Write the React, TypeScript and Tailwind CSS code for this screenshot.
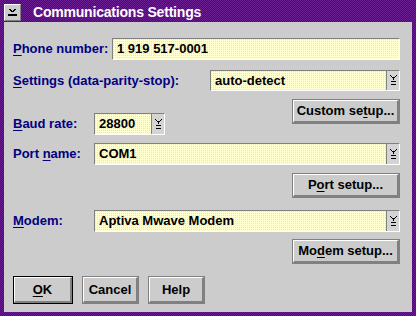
import React from 'react';

const frame =
  'bg-[conic-gradient(#1818b0_25%,#6a2090_0_50%,#1818b0_0_75%,#6a2090_0)] bg-size-[2px_2px]';
const dots =
  'bg-[linear-gradient(to_bottom,transparent_1px,#ffffd0_1px),linear-gradient(to_right,#ffff00_1px,#ffffd0_1px)] bg-size-[2px_2px]';

const DropGlyph = () => (
  <svg width="7" height="11" viewBox="0 0 7 11" shapeRendering="crispEdges" fill="#000">
    <rect x="0" y="0" width="1" height="1" />
    <rect x="6" y="0" width="1" height="1" />
    <rect x="1" y="1" width="1" height="1" />
    <rect x="5" y="1" width="1" height="1" />
    <rect x="2" y="2" width="3" height="1" />
    <rect x="3" y="3" width="1" height="2" />
    <rect x="1" y="6" width="5" height="1" />
    <rect x="1" y="9" width="5" height="1" />
  </svg>
);

const MenuGlyph = () => (
  <svg width="9" height="7" viewBox="0 0 9 7" shapeRendering="crispEdges" fill="#000">
    <rect x="1" y="0" width="2" height="1" />
    <rect x="6" y="0" width="2" height="1" />
    <rect x="2" y="1" width="2" height="1" />
    <rect x="5" y="1" width="2" height="1" />
    <rect x="3" y="2" width="3" height="1" />
    <rect x="0" y="5" width="9" height="2" />
  </svg>
);

function Label({ children, className = '' }: { children: React.ReactNode; className?: string }) {
  return <span className={`text-[#000080] whitespace-nowrap ${className}`}>{children}</span>;
}

function Combo({ value, withButton = true }: { value: string; withButton?: boolean }) {
  return (
    <div className="flex-1 h-full flex border border-t-[#808080] border-l-[#808080] border-b-white border-r-white">
      <div className={`flex-1 flex items-center pl-1 text-black text-[13px] ${dots}`}>{value}</div>
      {withButton && (
        <div className="w-[13px] flex items-center justify-center bg-[#d4d4d4] border-l border-[#808080]">
          <DropGlyph />
        </div>
      )}
    </div>
  );
}

function PushButton({
  children,
  className = '',
  isDefault = false,
}: {
  children: React.ReactNode;
  className?: string;
  isDefault?: boolean;
}) {
  return (
    <button
      className={`border ${isDefault ? 'border-black' : 'border-[#808080]'} bg-[#cccccc] p-0 ${className}`}
    >
      <div className="h-full flex items-center justify-center text-black border-t border-l border-white border-b-2 border-r-2 border-b-[#808080] border-r-[#808080]">
        {children}
      </div>
    </button>
  );
}

export default function App() {
  return (
    <div
      className={`w-[416px] h-[316px] p-1 flex flex-col font-['Liberation_Sans',Arial,sans-serif] font-bold text-[13px] ${frame}`}
    >
      <div className="h-[18px] flex items-start shrink-0">
        <div className="w-[17px] h-[17px] bg-[#cccccc] border-t border-l border-white border-b border-r border-b-[#808080] border-r-[#808080] flex items-center justify-center">
          <MenuGlyph />
        </div>
        <span className="ml-3 text-white text-[14px] leading-[17px] tracking-[-0.2px]">Communications Settings</span>
      </div>

      <div className="flex-1 bg-[#cccccc] flex flex-col pl-[9px] pr-[12px]">
        <div className="mt-[16px] h-[22px] flex items-center">
          <Label className="w-[99px]">
            <u className="underline-offset-2">P</u>hone number:
          </Label>
          <Combo value="1 919 517-0001" withButton={false} />
        </div>

        <div className="mt-[10px] h-[21px] flex items-center">
          <Label className="w-[197px]">
            <u className="underline-offset-2">S</u>ettings (data-parity-stop):
          </Label>
          <Combo value="auto-detect" />
        </div>

        <div className="mt-[8px] h-[36px] flex justify-between">
          <div className="self-end h-[22px] flex items-center">
            <Label className="w-[81px]">
              <u className="underline-offset-2">B</u>aud rate:
            </Label>
            <div className="w-[71px] h-full flex">
              <Combo value="28800" />
            </div>
          </div>
          <PushButton className="w-[108px] h-[25px]">
            Custom se<u className="underline-offset-2">t</u>up...
          </PushButton>
        </div>

        <div className="mt-[8px] h-[22px] flex items-center">
          <Label className="w-[81px]">
            Port <u className="underline-offset-2">n</u>ame:
          </Label>
          <Combo value="COM1" />
        </div>

        <PushButton className="mt-[8px] self-end w-[108px] h-[25px]">
          P<u className="underline-offset-2">o</u>rt setup...
        </PushButton>

        <div className="mt-[12px] h-[22px] flex items-center">
          <Label className="w-[81px]">
            <u className="underline-offset-2">M</u>odem:
          </Label>
          <Combo value="Aptiva Mwave Modem" />
        </div>

        <PushButton className="mt-[7px] self-end w-[108px] h-[25px]">
          Mo<u className="underline-offset-2">d</u>em setup...
        </PushButton>

        <div className="mt-[12px] h-[28px] flex gap-[9px]">
          <PushButton isDefault className="w-[60px] h-full">
            <u className="underline-offset-2">O</u>K
          </PushButton>
          <PushButton className="w-[57px] h-full">Cancel</PushButton>
          <PushButton className="w-[57px] h-full">Help</PushButton>
        </div>
      </div>
    </div>
  );
}
